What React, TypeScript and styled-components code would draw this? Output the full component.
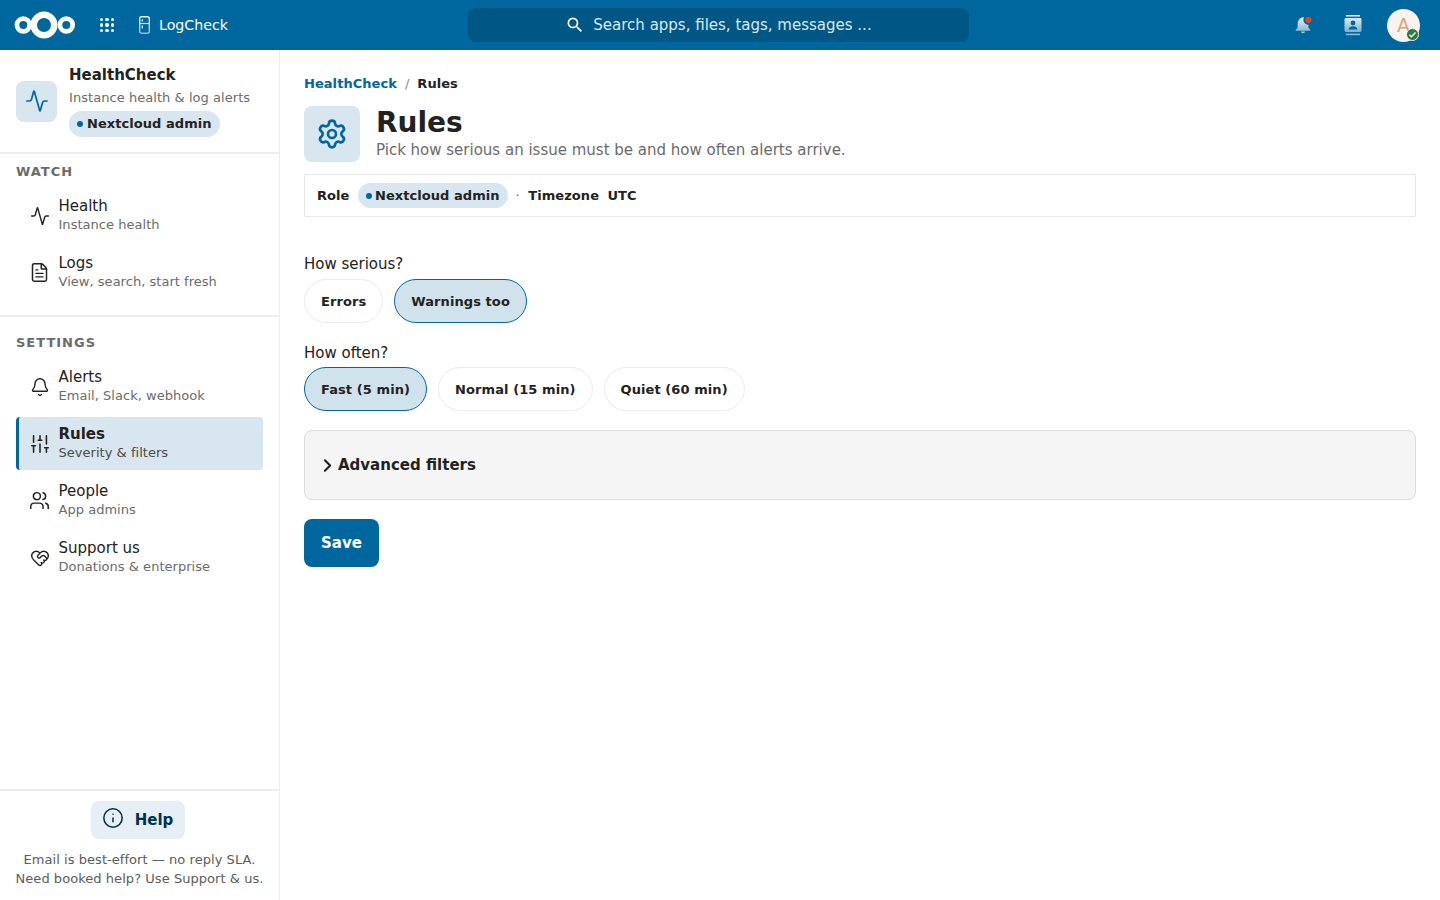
import React from 'react';
import styled, { createGlobalStyle } from 'styled-components';
import { Activity, FileText, Bell, SlidersVertical, Users, HeartHandshake, Settings, Info, ChevronRight } from 'lucide-react';

const Global = createGlobalStyle`
  html, body { margin: 0; padding: 0; height: 100%; background: #fff; }
  body { font-family: "DejaVu Sans", "Liberation Sans", sans-serif; color: #222; overflow: hidden; }
  * { box-sizing: border-box; }
`;

const Page = styled.div`
  width: 1440px; height: 900px; display: flex; flex-direction: column;
`;
const TopBar = styled.header`
  height: 50px; flex: none; background: #00679e; display: grid;
  grid-template-columns: 1fr 501px 1fr; align-items: center; padding-left: 14px; padding-right: 17px;
`;
const TopLeft = styled.div`display: flex; align-items: center;`;
const AppGrid = styled.div`
  margin-left: 24px; display: grid; grid-template-columns: repeat(3, 3.4px); gap: 2.1px; width: 14px;
  span { width: 3.4px; height: 3.4px; border-radius: 50%; background: rgba(255,255,255,.95); }
`;
const AppName = styled.div`
  margin-left: 25px; display: flex; align-items: center; gap: 9px; color: #fff; font-size: 14.2px;
`;
const SearchBox = styled.div`
  grid-column: 2; height: 34px; background: #005685; border-radius: 8px; display: flex; align-items: center;
  justify-content: center; gap: 8px; color: #dbe9f1; font-size: 15px;
`;
const TopRight = styled.div`display: flex; align-items: center; justify-content: flex-end; margin-right: 3px;`;
const HeadIcon = styled.div`
  width: 50px; height: 50px; display: flex; align-items: center; justify-content: center;
`;
const Avatar = styled.div`
  margin-left: 9px; width: 33px; height: 33px; border-radius: 50%; background: #f8f3ef; color: #d5a77f;
  font-size: 19px; display: flex; align-items: center; justify-content: center; position: relative;
`;
const StatusDot = styled.span`
  position: absolute; right: 1px; bottom: 1px; width: 13px; height: 13px; border-radius: 50%;
  background: #2d7b41; border: 1px solid #f8f3ef; display: flex; align-items: center; justify-content: center;
`;
const Body = styled.div`flex: 1; display: flex; min-height: 0;`;
const Sidebar = styled.aside`
  width: 280px; flex: none; border-right: 1px solid #ededed; display: flex; flex-direction: column;
`;
const Brand = styled.div`
  height: 104px; flex: none; border-bottom: 2px solid #ededed; padding: 0 16px 0; display: flex; align-items: center; gap: 12px;
`;
const BrandIcon = styled.div`
  width: 41px; height: 41px; border-radius: 8px; background: #d8e6ef; color: #00679e; display: flex; align-items: center; justify-content: center; flex: none;
`;
const BrandText = styled.div`display: flex; flex-direction: column; align-items: flex-start; margin-top: -2px;`;
const BrandTitle = styled.div`font-size: 15px; font-weight: 700; line-height: 20px; color: #222; padding-top: 1px;`;
const BrandSub = styled.div`font-size: 13px; letter-spacing: .05px; line-height: 17px; color: #6b6b6b; margin: 4px 0 5px;`;
const RolePill = styled.span`
  display: inline-flex; align-items: center; height: 26px; border-radius: 13px; background: #d8e6ef; color: #222;
  font-size: 13px; font-weight: 700; padding: 0 8px; gap: 4px; letter-spacing: .05px;
`;
const Dot = styled.span`width: 6px; height: 6px; border-radius: 50%; background: #00679e; flex: none;`;
const Section = styled.section<{ $h: number; $top: number; $line?: boolean }>`
  padding: ${p => p.$top}px 16px 0; height: ${p => p.$h}px; flex: none;
  ${p => p.$line ? 'border-bottom: 2px solid #ededed;' : ''}
`;
const SectionLabel = styled.div`
  font-size: 13px; font-weight: 700; letter-spacing: 1px; color: #6b6b6b; line-height: 16px; text-transform: uppercase; margin-bottom: 9px;
`;
const NavList = styled.div`display: flex; flex-direction: column; gap: 4px;`;
const NavItem = styled.div<{ $active?: boolean }>`
  height: 53px; width: 247px; display: flex; align-items: center; gap: 8.5px; border-radius: 4px;
  background: ${p => p.$active ? '#d8e6ef' : 'transparent'};
  border-left: 3px solid ${p => p.$active ? '#00679e' : 'transparent'};
  padding-left: 10px;
`;
const NavIcon = styled.span`
  width: 21px; height: 24px; flex: none; display: flex; align-items: center; justify-content: center; color: #222;
  svg { flex: none; }
`;
const NavText = styled.div`display: flex; flex-direction: column; margin-bottom: 2px;`;
const NavTitle = styled.div<{ $active?: boolean }>`
  font-size: 15px; line-height: 20px; font-weight: ${p => p.$active ? 700 : 400}; color: #222;
`;
const NavSub = styled.div<{ $active?: boolean }>`
  font-size: 13px; line-height: 17px; letter-spacing: .03px; color: ${p => p.$active ? '#4a4a4a' : '#6b6b6b'};
`;
const SideFoot = styled.div`
  margin-top: auto; height: 111px; flex: none; border-top: 2px solid #ededed; display: flex; flex-direction: column; align-items: center; padding-top: 10px;
`;
const HelpButton = styled.div`
  width: 94px; height: 38px; margin-right: 4px; border-radius: 8px; background: #e6eff5; color: #00324d; display: flex; align-items: center; justify-content: center; gap: 11px;
  font-size: 15px; font-weight: 700;
  svg { margin-top: -5px; }
`;
const FootNote = styled.div`
  font-size: 13px; letter-spacing: .05px; line-height: 19px; color: #5c5c5c; text-align: center; margin-top: 11px;
`;
const Main = styled.main`flex: 1; padding: 24px 24px 0; min-width: 0;`;
const Crumbs = styled.div`
  display: flex; align-items: center; height: 19px; font-size: 13px; font-weight: 700; gap: 8px; color: #222; letter-spacing: .05px;
`;
const CrumbLink = styled.span`color: #00679e;`;
const CrumbSep = styled.span`color: #8a8a8a; font-weight: 400;`;
const TitleRow = styled.div`display: flex; align-items: center; gap: 16px; margin-top: 13px;`;
const TitleIcon = styled.div`
  width: 56px; height: 56px; border-radius: 8px; background: #d8e6ef; color: #00679e; display: flex; align-items: center; justify-content: center;
`;
const H1 = styled.h1`font-size: 28px; line-height: 32px; margin: 0; font-weight: 700; color: #222;`;
const Lead = styled.p`font-size: 15px; line-height: 22px; margin: 0; color: #6b6b6b;`;
const MetaBar = styled.div`
  margin-top: 12px; height: 43px; border: 1px solid #e6e6e6; border-radius: 2px; display: flex; align-items: center; padding: 0 12px;
  font-size: 13px; font-weight: 700; color: #222; letter-spacing: .07px;
`;
const MetaPill = styled(RolePill)`height: 25px; margin-left: 8px; padding: 0 8px; gap: 3.5px;`;
const MetaSep = styled.span`font-weight: 400; color: #6b6b6b; margin: 0 8.5px 0 8px;`;
const MetaValue = styled.span`margin-left: 8.4px;`;
const Field = styled.div<{ $top: number }>`margin-top: ${p => p.$top}px;`;
const FieldLabel = styled.div`font-size: 15px; line-height: 18px; color: #222;`;
const Options = styled.div<{ $gap: number }>`display: flex; gap: 11px; margin-top: ${p => p.$gap}px;`;
const Option = styled.div<{ $on?: boolean }>`
  height: 44px; border-radius: 22px; padding: 0 16px; display: flex; align-items: center; font-size: 13px; font-weight: 700; color: #222;
  letter-spacing: .08px;
  background: ${p => p.$on ? '#d0e2ec' : '#fff'};
  border: 1px solid ${p => p.$on ? '#00679e' : '#ededed'};
`;
const Advanced = styled.div`
  margin-top: 19px; height: 70px; border: 1px solid #dcdcdc; border-radius: 8px; background: #f5f5f5; display: flex; align-items: center; padding-left: 12px;
  font-size: 15px; font-weight: 700; color: #222;
`;
const SaveButton = styled.div`
  margin-top: 19px; width: 75px; height: 48px; border-radius: 8px; background: #00679e; color: #fff; font-size: 15px; font-weight: 700;
  display: flex; align-items: center; justify-content: center;
`;

const Logo = () => (
  <svg width="62" height="30" viewBox="0 0 62 30" fill="none" stroke="#fff">
    <circle cx="9.3" cy="15" r="6.35" strokeWidth="4.7" />
    <circle cx="30" cy="15" r="10.25" strokeWidth="6.5" />
    <circle cx="52.3" cy="15" r="6.35" strokeWidth="4.7" />
  </svg>
);
const Fridge = () => (
  <svg width="11" height="18" viewBox="0 0 11 18" fill="none">
    <defs>
      <linearGradient id="fridgeg" x1="0" y1="0" x2="0" y2="1">
        <stop offset="0" stopColor="#eef5f9" />
        <stop offset="1" stopColor="#8fbad3" />
      </linearGradient>
    </defs>
    <rect x=".7" y=".7" width="9.6" height="16.6" rx="1.8" stroke="url(#fridgeg)" strokeWidth="1.4" />
    <path d="M1 7.5h9" stroke="#c9deea" strokeWidth="1.2" />
    <path d="M3.3 3.2v2.4M3.3 9.5v3" stroke="#eef5f9" strokeWidth="1.2" />
  </svg>
);
const NotifyBell = () => (
  <svg width="20" height="20" viewBox="0 0 20 20">
    <defs>
      <linearGradient id="bellg" x1="0" y1="0" x2="0" y2="1">
        <stop offset="0" stopColor="#e6f0f6" />
        <stop offset="1" stopColor="#8fbad3" />
      </linearGradient>
    </defs>
    <path d="M11 2.2C7 2 4.6 5.5 4.6 9.5v3.2L2.6 15v.7h14.8V15l-2-2.3V9.7c-2.8 0-5-2.3-5-5 0-.9.2-1.7.6-2.500z" fill="url(#bellg)" />
    <path d="M8 16.500h4c0 1-.9 1.700-2 1.700s-2-.7-2-1.700z" fill="#a8cadd" />
    <circle cx="15.4" cy="5" r="3" fill="#dc4a1e" />
  </svg>
);
const Contacts = () => (
  <svg width="20" height="22" viewBox="0 0 20 22">
    <defs>
      <linearGradient id="cong" x1="0" y1="0" x2="0" y2="1">
        <stop offset="0" stopColor="#dcebf3" />
        <stop offset="1" stopColor="#7fb0cd" />
      </linearGradient>
    </defs>
    <rect x="3" y="1" width="14" height="1.6" fill="#d9e8f1" />
    <rect x="3" y="19.6" width="14" height="1.6" fill="#8fbad3" />
    <rect x="1.5" y="4" width="17" height="14" rx="1.4" fill="url(#cong)" />
    <circle cx="10" cy="9" r="2.4" fill="#00679e" />
    <path d="M5.6 15.4c.2-2.200 2-3.200 4.400-3.200s4.200 1 4.400 3.200z" fill="#00679e" />
  </svg>
);
const Check = () => (
  <svg width="9" height="9" viewBox="0 0 9 9" fill="none" stroke="#fff" strokeWidth="1.4"><path d="M1.5 4.8l2 1.900 4-4.200" /></svg>
);
const Magnify = () => (
  <svg width="20" height="20" viewBox="0 0 24 24" fill="#fff">
    <path d="M9.5,3A6.5,6.5 0 0,1 16,9.5C16,11.11 15.41,12.59 14.44,13.73L14.71,14H15.5L20.5,19L19,20.5L14,15.5V14.71L13.73,14.44C12.59,15.41 11.11,16 9.5,16A6.5,6.5 0 0,1 3,9.5A6.5,6.5 0 0,1 9.5,3M9.5,5C7,5 5,7 5,9.5C5,12 7,14 9.5,14C12,14 14,12 14,9.5C14,7 12,5 9.5,5Z" />
  </svg>
);

type Entry = { icon: React.ElementType; title: string; sub: string; size: number; active?: boolean };
const nav1: Entry[] = [
  { icon: Activity, title: 'Health', sub: 'Instance health', size: 20 },
  { icon: FileText, title: 'Logs', sub: 'View, search, start fresh', size: 21 },
];
const nav2: Entry[] = [
  { icon: Bell, title: 'Alerts', sub: 'Email, Slack, webhook', size: 20 },
  { icon: SlidersVertical, title: 'Rules', sub: 'Severity & filters', size: 22, active: true },
  { icon: Users, title: 'People', sub: 'App admins', size: 21 },
  { icon: HeartHandshake, title: 'Support us', sub: 'Donations & enterprise', size: 20 },
];

const Nav = ({ items }: { items: Entry[] }) => (
  <NavList>
    {items.map(({ icon: Icon, title, sub, active, size }) => (
      <NavItem key={title} $active={active}>
        <NavIcon><Icon size={size} strokeWidth={1.7} /></NavIcon>
        <NavText>
          <NavTitle $active={active}>{title}</NavTitle>
          <NavSub $active={active}>{sub}</NavSub>
        </NavText>
      </NavItem>
    ))}
  </NavList>
);

export default function App() {
  return (
    <Page>
      <Global />
      <TopBar>
        <TopLeft>
          <Logo />
          <AppGrid>{Array.from({ length: 9 }, (_, i) => <span key={i} />)}</AppGrid>
          <AppName><Fridge />LogCheck</AppName>
        </TopLeft>
        <SearchBox><Magnify />Search apps, files, tags, messages ...</SearchBox>
        <TopRight>
          <HeadIcon><NotifyBell /></HeadIcon>
          <HeadIcon><Contacts /></HeadIcon>
          <Avatar>A<StatusDot><Check /></StatusDot></Avatar>
        </TopRight>
      </TopBar>
      <Body>
        <Sidebar>
          <Brand>
            <BrandIcon><Activity size={24} strokeWidth={1.7} /></BrandIcon>
            <BrandText>
              <BrandTitle>HealthCheck</BrandTitle>
              <BrandSub>Instance health &amp; log alerts</BrandSub>
              <RolePill><Dot />Nextcloud admin</RolePill>
            </BrandText>
          </Brand>
          <Section $h={163} $top={10} $line>
            <SectionLabel>Watch</SectionLabel>
            <Nav items={nav1} />
          </Section>
          <Section $h={280} $top={18}>
            <SectionLabel>Settings</SectionLabel>
            <Nav items={nav2} />
          </Section>
          <SideFoot>
            <HelpButton><Info size={22} strokeWidth={1.7} />Help</HelpButton>
            <FootNote>Email is best-effort — no reply SLA.<br />Need booked help? Use Support &amp; us.</FootNote>
          </SideFoot>
        </Sidebar>
        <Main>
          <Crumbs><CrumbLink>HealthCheck</CrumbLink><CrumbSep>/</CrumbSep><span>Rules</span></Crumbs>
          <TitleRow>
            <TitleIcon><Settings size={32} strokeWidth={2} /></TitleIcon>
            <div>
              <H1>Rules</H1>
              <Lead>Pick how serious an issue must be and how often alerts arrive.</Lead>
            </div>
          </TitleRow>
          <MetaBar>
            Role
            <MetaPill><Dot />Nextcloud admin</MetaPill>
            <MetaSep>·</MetaSep>
            Timezone<MetaValue>UTC</MetaValue>
          </MetaBar>
          <Field $top={38}>
            <FieldLabel>How serious?</FieldLabel>
            <Options $gap={6}>
              <Option>Errors</Option>
              <Option $on>Warnings too</Option>
            </Options>
          </Field>
          <Field $top={21}>
            <FieldLabel>How often?</FieldLabel>
            <Options $gap={5}>
              <Option $on>Fast (5 min)</Option>
              <Option>Normal (15 min)</Option>
              <Option>Quiet (60 min)</Option>
            </Options>
          </Field>
          <Advanced><ChevronRight size={21} strokeWidth={2.4} />Advanced filters</Advanced>
          <SaveButton>Save</SaveButton>
        </Main>
      </Body>
    </Page>
  );
}
